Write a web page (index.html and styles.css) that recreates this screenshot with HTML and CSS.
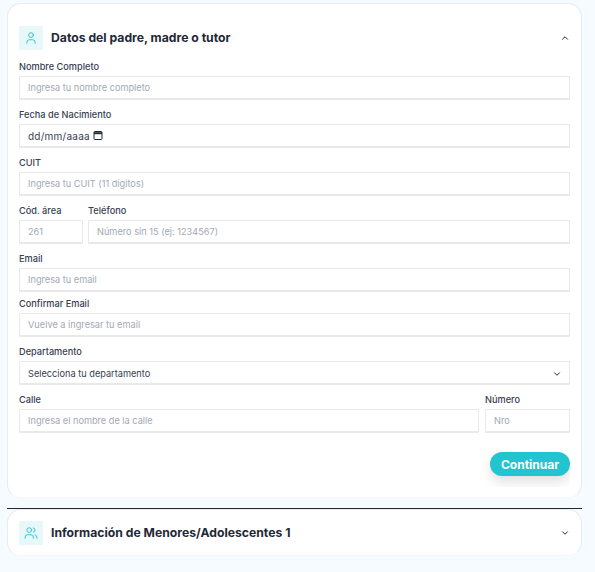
FILE: index.html
```html
<!DOCTYPE html>
<html>

<head>
    <meta name="viewport" content="width=device-width, initial-scale=1">
    <title>Datos del padre, madre o tutor</title>
    <link rel="stylesheet" href="styles.css">
</head>

<body>
    <div id="container">
        <section class="card card-open">
            <div class="card-header">
                <span class="card-icon">
                    <svg viewBox="0 0 24 24" width="14" height="14"><path d="M19 21v-2a4 4 0 0 0-4-4H9a4 4 0 0 0-4 4v2"/><circle cx="12" cy="7" r="4"/></svg>
                </span>
                <h2>Datos del padre, madre o tutor</h2>
                <svg class="chevron" viewBox="0 0 24 24" width="10" height="10"><path d="m18 15-6-6-6 6"/></svg>
            </div>
            <form>
                <div class="field">
                    <label>Nombre Completo</label>
                    <input type="text" placeholder="Ingresa tu nombre completo">
                </div>
                <div class="field">
                    <label>Fecha de Nacimiento</label>
                    <span class="input-wrapper">
                        <input class="date-input" type="text" value="dd/mm/aaaa">
                        <svg class="calendar-icon" viewBox="0 0 10 10" width="10" height="10"><rect x="1" y="1.5" width="8" height="8" rx="0.8"/><path class="calendar-band" d="M1 3.2h8"/></svg>
                    </span>
                </div>
                <div class="field">
                    <label>CUIT</label>
                    <input type="text" placeholder="Ingresa tu CUIT (11 dígitos)">
                </div>
                <div class="field-row row-phone">
                    <div class="field area-code">
                        <label>Cód. área</label>
                        <input type="text" placeholder="261">
                    </div>
                    <div class="field grow">
                        <label>Teléfono</label>
                        <input type="text" placeholder="Número sin 15 (ej: 1234567)">
                    </div>
                </div>
                <div class="field">
                    <label>Email</label>
                    <input type="text" placeholder="Ingresa tu email">
                </div>
                <div class="field field-tight">
                    <label>Confirmar Email</label>
                    <input type="text" placeholder="Vuelve a ingresar tu email">
                </div>
                <div class="field">
                    <label>Departamento</label>
                    <span class="input-wrapper">
                        <select>
                            <option>Selecciona tu departamento</option>
                        </select>
                        <svg class="chevron select-chevron" viewBox="0 0 24 24" width="10" height="10"><path d="m6 9 6 6 6-6"/></svg>
                    </span>
                </div>
                <div class="field-row row-street">
                    <div class="field grow">
                        <label>Calle</label>
                        <input type="text" placeholder="Ingresa el nombre de la calle">
                    </div>
                    <div class="field street-number">
                        <label>Número</label>
                        <input type="text" placeholder="Nro">
                    </div>
                </div>
                <div class="form-actions">
                    <button class="continue-button" type="button">Continuar</button>
                </div>
            </form>
        </section>

        <hr class="divider">

        <section class="card card-closed">
            <div class="card-header">
                <span class="card-icon">
                    <svg viewBox="0 0 24 24" width="14" height="14"><path d="M16 21v-2a4 4 0 0 0-4-4H6a4 4 0 0 0-4 4v2"/><circle cx="9" cy="7" r="4"/><path d="M22 21v-2a4 4 0 0 0-3-3.87"/><path d="M16 3.13a4 4 0 0 1 0 7.75"/></svg>
                </span>
                <h2>Información de Menores/Adolescentes 1</h2>
                <svg class="chevron" viewBox="0 0 24 24" width="10" height="10"><path d="m6 9 6 6 6-6"/></svg>
            </div>
        </section>
    </div>
</body>

</html>
```

FILE: styles.css
```css
* {
    box-sizing: border-box;
}

body {
    margin: 0;
    background-color: #f5fbfe;
    font-family: "Inter", "Open Sans", sans-serif;
    color: #1f2937;
}

#container {
    width: 593px;
    padding: 3px 11px 0 7px;
}

.card {
    background-color: white;
    border: 1px solid #e8ebef;
    border-bottom-color: #f3f7fa;
    border-radius: 14px;
}

.card-open {
    padding: 22px 11px 10px;
}

.card-closed {
    padding: 11px 11px 10px;
}

.card-header {
    display: flex;
    align-items: center;
    gap: 8px;
}

.card-header h2 {
    flex: 1;
    margin: 0 0 2px;
    font-size: 12.2px;
    font-weight: 700;
    color: #1f2937;
}

.card-icon {
    width: 24px;
    height: 24px;
    display: flex;
    align-items: center;
    justify-content: center;
    background-color: #e6f8f9;
}

.card-icon svg {
    fill: none;
    stroke: #22c4d0;
    stroke-width: 1.6;
    stroke-linecap: round;
    stroke-linejoin: round;
}

.chevron {
    fill: none;
    stroke: #1f2937;
    stroke-width: 2.4;
    stroke-linecap: round;
    stroke-linejoin: round;
}

form {
    margin-top: 10px;
    padding-bottom: 11px;
    overflow: hidden;
}

.field {
    display: flex;
    flex-direction: column;
    margin-bottom: 8px;
}

.field-tight {
    margin-top: -3px;
}

.field label {
    height: 14px;
    line-height: 14px;
    margin-bottom: 2px;
    font-size: 9.2px;
    font-weight: 500;
    color: #374151;
}

.field input,
.field select {
    display: block;
    width: 100%;
    height: 24px;
    padding: 0 8px;
    border: 1px solid #e8e9ec;
    border-bottom-width: 2px;
    border-radius: 1px;
    background-color: white;
    font-family: inherit;
    font-size: 9.2px;
    color: #374151;
    outline: none;
}

.field input::placeholder {
    color: #a3a9b4;
}

.field .date-input {
    font-size: 10px;
    letter-spacing: 0.25px;
}

.input-wrapper {
    position: relative;
    display: block;
}

.calendar-icon {
    position: absolute;
    left: 74px;
    top: 6px;
    fill: none;
    stroke: #1f2937;
    stroke-width: 1;
}

.calendar-band {
    stroke-width: 2;
}

.field-row {
    display: flex;
}

.row-phone {
    gap: 5px;
}

.row-street {
    gap: 6px;
}

.grow {
    flex: 1;
}

.area-code {
    width: 64px;
}

.street-number {
    width: 85px;
}

.field select {
    appearance: none;
    padding-top: 1px;
}

.select-chevron {
    position: absolute;
    right: 8px;
    top: 8px;
}

.form-actions {
    display: flex;
    justify-content: flex-end;
    margin-top: 11px;
}

.continue-button {
    width: 80px;
    height: 24px;
    border: none;
    border-radius: 12px;
    background-color: #22c4d0;
    color: white;
    font-family: inherit;
    font-size: 12px;
    font-weight: 700;
    box-shadow: 0 6px 12px rgba(0, 0, 0, 0.12);
}

.divider {
    margin: 10px 0 0;
    border: none;
    border-top: 1px solid #1f2937;
}
```
